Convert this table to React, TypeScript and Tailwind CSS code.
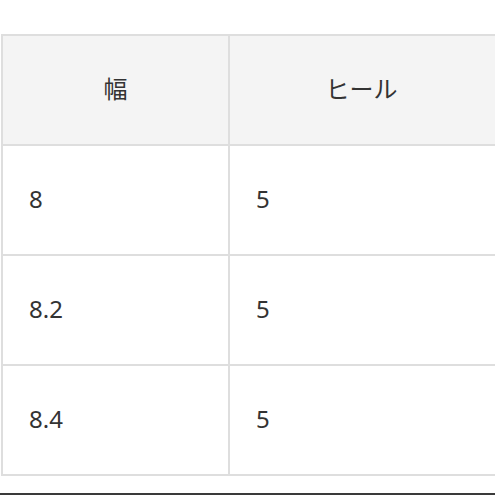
const rows = [
  { width: '8', heel: '5' },
  { width: '8.2', heel: '5' },
  { width: '8.4', heel: '5' },
];

export default function App() {
  return (
    <div
      className="w-[495px] h-[495px] overflow-hidden bg-white flex flex-col text-[#333] text-[24px]"
      style={{ fontFamily: '"Noto Sans", "Noto Sans CJK JP", sans-serif' }}
    >
      <div className="h-[34px] shrink-0" />

      {/* Size table */}
      <div className="ml-[1px] w-[520px] border-t-2 border-l-2 border-[#dedede]">
        <div className="flex h-[110px] border-b-2 border-[#dedede] bg-[#f4f4f4]">
          <div className="w-[227px] shrink-0 border-r-2 border-[#dedede] flex items-center justify-center pb-[2px]">
            幅
          </div>
          <div className="w-[263px] shrink-0 flex items-center justify-center pb-[2px]">ヒール</div>
        </div>
        {rows.map((row, i) => (
          <div key={i} className="flex h-[110px] border-b-2 border-[#dedede]">
            <div className="w-[227px] shrink-0 border-r-2 border-[#dedede] flex items-center pl-[26px] pb-[2px]">
              {row.width}
            </div>
            <div className="flex-1 flex items-center pl-[26px] pb-[2px]">{row.heel}</div>
          </div>
        ))}
      </div>

      <div className="flex-1" />
      <div className="h-[2px] bg-[#3a3a3a] shrink-0" />
    </div>
  );
}
